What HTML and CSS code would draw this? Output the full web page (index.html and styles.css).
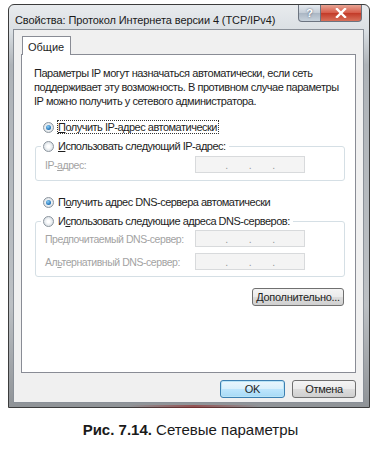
FILE: index.html
```html
<!DOCTYPE html>
<html lang="ru">

<head>
  <meta charset="utf-8" />
  <title>Свойства: Протокол Интернета версии 4 (TCP/IPv4)</title>
  <link rel="stylesheet" href="styles.css">
</head>

<body>
  <div class="window">
    <div class="titlebar">
      <span class="title">Свойства: Протокол Интернета версии 4 (TCP/IPv4)</span>
      <div class="caption_buttons">
        <span class="btn_help">?</span>
        <span class="btn_close">
          <svg width="12" height="10" viewBox="0 0 12 10">
            <path d="M2 1 L10 9 M10 1 L2 9" stroke="#ffffff" stroke-width="2.4" stroke-linecap="square" />
          </svg>
        </span>
      </div>
    </div>

    <div class="dialog">
      <div class="tabs">
        <span class="tab">Общие</span>
      </div>

      <div class="panel">
        <p class="intro">Параметры IP могут назначаться автоматически, если сеть<br>
          поддерживает эту возможность. В противном случае параметры<br>
          IP можно получить у сетевого администратора.</p>

        <!-- IP -->
        <div class="radio_row first_radio">
          <span class="radio checked"></span>
          <span class="focus"><u>П</u>олучить IP-адрес автоматически</span>
        </div>
        <fieldset class="group">
          <legend class="radio_row">
            <span class="radio"></span>
            <span><u>И</u>спользовать следующий IP-адрес:</span>
          </legend>
          <div class="field_row ip_row">
            <span class="field_label">IP-<u>а</u>дрес:</span>
            <span class="ip_box"><i>.</i><i>.</i><i>.</i></span>
          </div>
        </fieldset>

        <!-- DNS -->
        <div class="radio_row dns_radio">
          <span class="radio checked"></span>
          <span>П<u>о</u>лучить адрес DNS-сервера автоматически</span>
        </div>
        <fieldset class="group dns_group">
          <legend class="radio_row">
            <span class="radio"></span>
            <span>И<u>с</u>пользовать следующие адреса DNS-серверов:</span>
          </legend>
          <div class="field_row pref_row">
            <span class="field_label">Пре<u>д</u>почитаемый DNS-сервер:</span>
            <span class="ip_box"><i>.</i><i>.</i><i>.</i></span>
          </div>
          <div class="field_row alt_row">
            <span class="field_label">Ал<u>ь</u>тернативный DNS-сервер:</span>
            <span class="ip_box"><i>.</i><i>.</i><i>.</i></span>
          </div>
        </fieldset>

        <div class="advanced_row">
          <button class="push_button"><u>Д</u>ополнительно...</button>
        </div>
      </div>

      <div class="dialog_buttons">
        <button class="push_button ok">OK</button>
        <button class="push_button cancel">Отмена</button>
      </div>
    </div>
  </div>

  <p class="figure_caption"><b>Рис. 7.14.</b> Сетевые параметры</p>
</body>

</html>
```

FILE: styles.css
```css
body {
  margin: 0;
  background-color: #ffffff;
  font-family: "Liberation Sans", Arial, sans-serif;
  color: #1e1e1e;
}

.window {
  width: 362px;
  height: 404px;
  margin: 4px 0 0 8px;
  border: 1px solid #3c3c3c;
  border-radius: 6px 6px 0 0;
  background: linear-gradient(to bottom, #e8ebee 0px, #dadfe3 26px, #aeb3b8 60px, #bcc0c4 300px, #8e9296 404px);
  display: flex;
  flex-direction: column;
  box-sizing: border-box;
  padding: 0 5px 4px 4px;
  position: relative;
}

.window::after {
  content: "";
  position: absolute;
  left: 120px;
  right: 110px;
  bottom: -1px;
  height: 3px;
  background: linear-gradient(to right, rgba(0, 0, 0, 0), rgba(150, 40, 40, 0.6), rgba(0, 0, 0, 0));
}

.titlebar {
  height: 24px;
  display: flex;
  align-items: flex-start;
  justify-content: space-between;
}

.title {
  font-size: 11px;
  margin: 9px 0 0 2px;
  color: #1a1a1a;
  letter-spacing: -0.1px;
  white-space: nowrap;
}

.caption_buttons {
  display: flex;
  margin-right: 2px;
}

.btn_help,
.btn_close {
  height: 17px;
  border: 1px solid #6c7480;
  border-top: 0;
  box-sizing: border-box;
  display: flex;
  align-items: center;
  justify-content: center;
}

.btn_help {
  width: 23px;
  border-radius: 0 0 0 4px;
  background: linear-gradient(to bottom, #e6ebf0, #c3ccd6 50%, #aab6c3 51%, #c8d2dc);
  color: #ffffff;
  font-weight: bold;
  font-size: 11px;
  text-shadow: 0 0 2px #40506a;
}

.btn_close {
  width: 41px;
  border-left: 0;
  border-radius: 0 0 4px 0;
  background: linear-gradient(to bottom, #e8a494, #d65a48 50%, #c23a28 51%, #d8705a);
}

.dialog {
  flex: 1;
  background-color: #f0f0f0;
  border: 1px solid #8a9098;
  padding: 6px 7px 0 7px;
  display: flex;
  flex-direction: column;
}

.tabs {
  display: flex;
  margin-left: 1px;
}

.tab {
  height: 19px;
  box-sizing: border-box;
  padding: 4px 6px 0 5px;
  font-size: 11px;
  background-color: #ffffff;
  border: 1px solid #898c95;
  border-bottom: 0;
  margin-bottom: -1px;
  position: relative;
}

.panel {
  height: 319px;
  box-sizing: border-box;
  background-color: #ffffff;
  border: 1px solid #898c95;
  padding: 11px 10px 0 12px;
}

.intro {
  margin: 0;
  font-size: 11px;
  line-height: 14px;
  letter-spacing: -0.45px;
  white-space: nowrap;
}

.radio_row {
  display: flex;
  align-items: center;
  height: 14px;
  font-size: 11px;
  letter-spacing: -0.5px;
  white-space: nowrap;
}

.first_radio {
  margin: 12px 0 0 9px;
}

.dns_radio {
  margin: 14px 0 0 9px;
}

.radio {
  width: 11px;
  height: 11px;
  box-sizing: border-box;
  border: 1px solid #8c959e;
  border-radius: 50%;
  background: radial-gradient(circle at 50% 50%, #ffffff 20%, #dde3e8 70%, #c7ced5 100%);
  margin-right: 4px;
  flex-shrink: 0;
  position: relative;
}

.radio.checked::after {
  content: "";
  position: absolute;
  left: 2px;
  top: 2px;
  width: 5px;
  height: 5px;
  border-radius: 50%;
  background: radial-gradient(circle at 40% 35%, #8fd0f6, #1c6fb6 70%, #17487a);
}

.focus {
  outline: 1px dotted #333333;
  outline-offset: 0;
  padding-right: 1px;
}

.group {
  margin: 5px 0 0 1px;
  padding: 0 0 7px 0;
  border: 1px solid #d5dfe5;
  border-radius: 3px;
}

.group legend {
  margin-left: 5px;
  padding: 0 3px 0 2px;
}

.dns_group {
  margin-top: 5px;
  padding-bottom: 6px;
}

.field_row {
  display: flex;
  align-items: center;
  justify-content: space-between;
  padding: 0 39px 0 9px;
  color: #a3a3a3;
  font-size: 10.5px;
  letter-spacing: -0.45px;
  white-space: nowrap;
}

.ip_row {
  margin-top: 3px;
}

.pref_row {
  margin-top: 2px;
}

.alt_row {
  margin-top: 6px;
}

.ip_box {
  width: 110px;
  height: 17px;
  box-sizing: border-box;
  border: 1px solid #d8dadc;
  background-color: #f4f4f4;
  display: flex;
  justify-content: space-evenly;
  padding: 0 8px;
  color: #9a9a9a;
}

.ip_box i {
  font-style: normal;
  line-height: 17px;
}

.advanced_row {
  display: flex;
  justify-content: flex-end;
  margin: 11px 1px 0 0;
}

.push_button {
  height: 18px;
  box-sizing: border-box;
  padding: 0;
  font-family: "Liberation Sans", Arial, sans-serif;
  font-size: 11px;
  color: #1e1e1e;
  border: 1px solid #707070;
  border-radius: 3px;
  background: linear-gradient(to bottom, #f4f4f4, #ebebeb 50%, #dddddd 51%, #cfcfcf);
  letter-spacing: -0.3px;
}

.advanced_row .push_button {
  width: 92px;
}

.dialog_buttons {
  display: flex;
  justify-content: flex-end;
  gap: 7px;
  margin-top: 7px;
}

.ok {
  width: 65px;
  border-color: #3c7fb1;
  background: linear-gradient(to bottom, #eaf6fd, #d9f0fc 50%, #bee6fd 51%, #a7d9f5);
  box-shadow: inset 0 0 0 1px #b9e4f7;
}

.cancel {
  width: 64px;
}

.figure_caption {
  margin: 13px 0 0 0;
  text-align: center;
  font-size: 15px;
  color: #1a1a1a;
}
```
